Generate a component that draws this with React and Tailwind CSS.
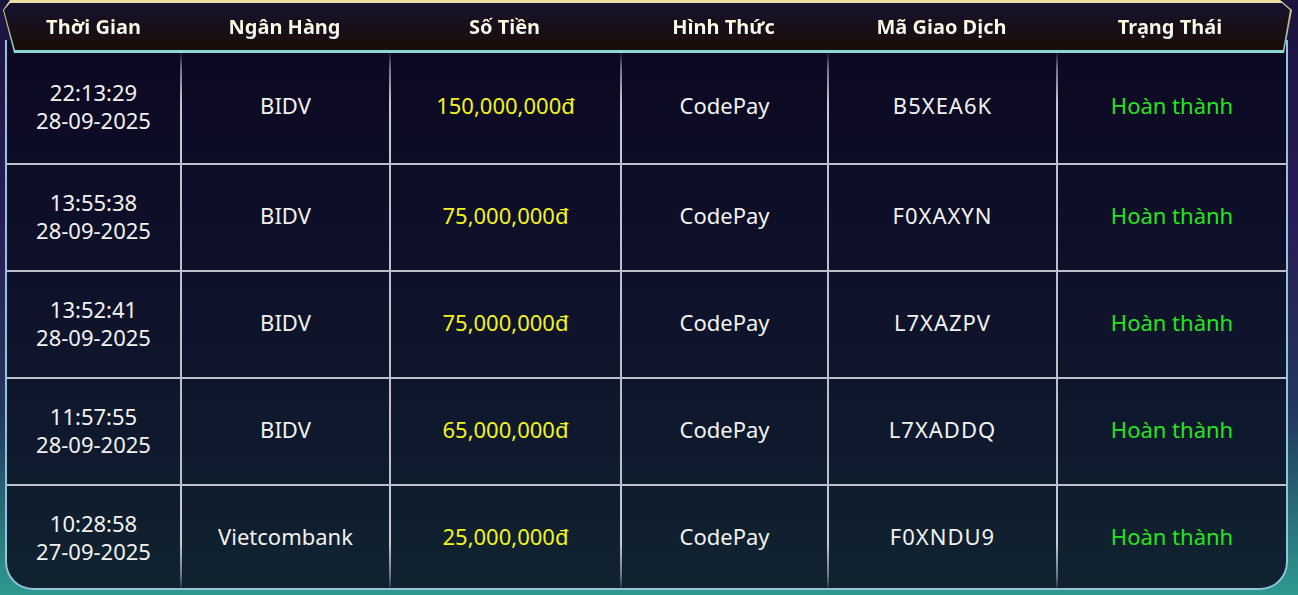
import React from "react";

const columns = ["Thời Gian", "Ngân Hàng", "Số Tiền", "Hình Thức", "Mã Giao Dịch", "Trạng Thái"];

const rows = [
    { time: "22:13:29", date: "28-09-2025", bank: "BIDV", amount: "150,000,000đ", method: "CodePay", code: "B5XEA6K", status: "Hoàn thành" },
    { time: "13:55:38", date: "28-09-2025", bank: "BIDV", amount: "75,000,000đ", method: "CodePay", code: "F0XAXYN", status: "Hoàn thành" },
    { time: "13:52:41", date: "28-09-2025", bank: "BIDV", amount: "75,000,000đ", method: "CodePay", code: "L7XAZPV", status: "Hoàn thành" },
    { time: "11:57:55", date: "28-09-2025", bank: "BIDV", amount: "65,000,000đ", method: "CodePay", code: "L7XADDQ", status: "Hoàn thành" },
    { time: "10:28:58", date: "27-09-2025", bank: "Vietcombank", amount: "25,000,000đ", method: "CodePay", code: "F0XNDU9", status: "Hoàn thành" },
];

// same column widths for header and body so they line up
const gridCols = "grid grid-cols-[173px_209px_231px_207px_229px_1fr]";

// vertical separators fade out at the top of the first row and the bottom of the last one
const sepFirst = "border-l-2 [border-image:linear-gradient(180deg,transparent_0%,#6e7184_15%,#c4c7d4_45%,#c4c7d4_100%)_1]";
const sepMid = "border-l-2 border-[#bcc0cd]";
const sepLast = "border-l-2 [border-image:linear-gradient(180deg,#c4c7d4_0%,#c4c7d4_55%,#6a7488_85%,transparent_100%)_1]";

const App = () => {
    return (
        <div className="relative w-[1298px] h-[595px] overflow-hidden bg-[linear-gradient(180deg,#1a1440_0%,#2a1b55_35%,#22385e_70%,#2e9a8e_100%)] font-['Noto_Sans',sans-serif]">
            {/* frame with the table body */}
            <div className="absolute left-[5px] right-[10px] top-[40px] bottom-[5px] border-x-2 border-b-2 border-[#8fc4dc] rounded-b-[28px] overflow-hidden bg-[linear-gradient(180deg,#0c0822_0%,#0e1029_40%,#0f1a2e_75%,#10232f_100%)]">
                <div className="flex flex-col pt-[12px]">
                    {rows.map((row, i) => {
                        const sep = i === 0 ? sepFirst : i === rows.length - 1 ? sepLast : sepMid;
                        const cell = `flex items-center justify-center pb-[4px] text-[22px] ${sep}`;
                        return (
                            <div
                                key={i}
                                className={`${gridCols} ${i === 0 ? "h-[111px]" : "h-[107px] border-t-2 border-[#bcc0cd]"}`}
                            >
                                <div className="flex flex-col items-center justify-center pb-[4px] text-[22px] leading-[28px] text-[#f2f2f2]">
                                    <span>{row.time}</span>
                                    <span>{row.date}</span>
                                </div>
                                <div className={`${cell} text-[#f2f2f2]`}>{row.bank}</div>
                                <div className={`${cell} text-[#f4f41c]`}>{row.amount}</div>
                                <div className={`${cell} text-[#f2f2f2]`}>{row.method}</div>
                                <div className={`${cell} tracking-[1px] text-[#f2f2f2]`}>{row.code}</div>
                                <div className={`${cell} text-[#26e41e]`}>{row.status}</div>
                            </div>
                        );
                    })}
                </div>
            </div>

            {/* header bar: gold top edge, cyan bottom edge, beveled corners */}
            <div className="absolute left-0 top-0 w-[1294px] h-[53px] bg-[linear-gradient(180deg,#efe0a8_0%,#c8b070_40%,#7fc8c8_90%,#8ee0d8_100%)] [clip-path:polygon(10px_0,1280px_0,1292px_10px,1284px_53px,14px_53px,3px_10px)]">
                <div className="absolute inset-x-[2px] top-[3px] bottom-[3px] bg-[linear-gradient(180deg,#161330_0%,#170f1c_45%,#1c0d07_100%)] [clip-path:polygon(8px_0,1280px_0,1288px_7px,1281px_47px,13px_47px,2px_7px)]">
                    <div className={`${gridCols} h-full pl-[5px] pr-[8px]`}>
                        {columns.map((col) => (
                            <div key={col} className="flex items-center justify-center">
                                <span className="text-[20px] font-bold bg-[linear-gradient(180deg,#fff4c0_0%,#fffbe8_50%,#d8e6ff_100%)] bg-clip-text text-transparent">
                                    {col}
                                </span>
                            </div>
                        ))}
                    </div>
                </div>
            </div>
        </div>
    );
};

export default App;
